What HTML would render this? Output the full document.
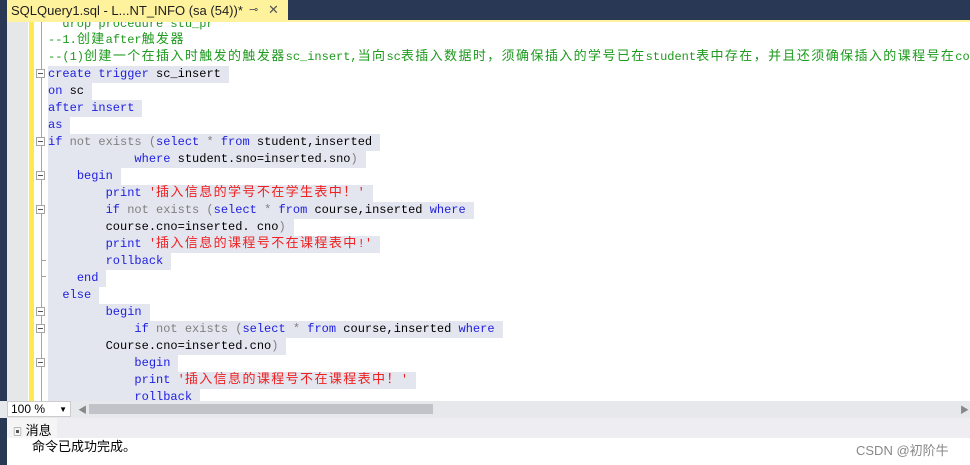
<!DOCTYPE html>
<html><head><meta charset="utf-8"><style>
*{margin:0;padding:0;box-sizing:border-box}
body{width:970px;height:465px;overflow:hidden;background:#fff;position:relative;font-family:"Liberation Sans","Noto Sans CJK SC",sans-serif}
#nav{position:absolute;left:0;top:0;width:970px;height:20px;background:#293955}
#tab{position:absolute;left:0;top:0;width:288px;height:21px;background:#fff29d;font-size:13px;color:#1e1e1e;padding:3px 0 0 11px;white-space:nowrap;line-height:15px}
#tabline{position:absolute;left:0;top:20px;width:970px;height:2px;background:#fff29d}
#lb{position:absolute;left:0;top:0;width:7px;height:465px;background:#293955}
#gut{position:absolute;left:7px;top:22px;width:21px;height:379px;background:#e6e7e8}
#yel{position:absolute;left:29px;top:22px;width:5px;height:379px;background:#fee94e}
#vl{position:absolute;left:41px;top:22px;width:1px;height:379px;background:#a5a5a5}
.fb{position:absolute;left:36px;width:9px;height:9px;border:1px solid #a5a5a5;background:#fff}
.fb:after{content:"";position:absolute;left:1px;top:3px;width:5px;height:1px;background:#555}
.tk{position:absolute;left:41px;width:5px;height:1px;background:#a5a5a5}
#code{position:absolute;left:48px;top:22px;width:922px;height:379px;overflow:hidden}
.l{position:absolute;left:0;height:17px;line-height:17px;font-family:"Liberation Mono","Noto Sans CJK SC",monospace;font-size:12px;color:#000;white-space:pre;overflow:hidden}
.s{display:inline-block;height:17px;line-height:17px;vertical-align:top;background:#e3e6ef;padding-right:8px;overflow:hidden}
.k{color:#2020e0}.g{color:#808080}.c{color:#1e9a1e}.r{color:#f02020}
.z{font-size:13px;letter-spacing:1.4px;font-family:"Noto Sans CJK SC",sans-serif;line-height:12px}
#hs{position:absolute;left:0;top:401px;width:970px;height:17px;background:#e7e8ec}
#zoom{position:absolute;left:7px;top:401px;width:64px;height:16px;background:#fff;border:1px solid #ccc;font-size:12px;padding-left:3px;line-height:14px}
#thumb{position:absolute;left:89px;top:404px;width:344px;height:10px;background:#c2c3c9}
#msgbar{position:absolute;left:7px;top:418px;width:963px;height:20px;background:#eeeef2}
#msgtab{position:absolute;left:7px;top:418px;width:50px;height:20px;background:#f5f5f5;font-size:13px;padding:2px 0 0 6px}
#msg{position:absolute;left:32px;top:436px;font-size:13px}
#wm{position:absolute;left:856px;top:440px;font-size:13px;color:#888}
</style></head><body>
<div id="nav"></div>
<div id="tab">SQLQuery1.sql - L...NT_INFO (sa (54))*<span style="position:absolute;left:249px;top:3px;font-size:11px;color:#555">⊸</span><span style="position:absolute;left:268px;top:2px;color:#555">✕</span></div>
<div id="tabline"></div>
<div id="lb"></div>
<div id="gut"></div>
<div id="yel"></div>
<div id="vl"></div>
<div class="fb" style="top:69px"></div>
<div class="fb" style="top:137px"></div>
<div class="fb" style="top:171px"></div>
<div class="fb" style="top:205px"></div>
<div class="tk" style="top:260px"></div>
<div class="tk" style="top:276px"></div>
<div class="fb" style="top:307px"></div>
<div class="fb" style="top:324px"></div>
<div class="fb" style="top:358px"></div>
<div id="code">
<div class="l" style="top:-6px"><span class="c">  drop procedure stu_pr</span></div>
<div class="l" style="top:10px"><span class="c">--1.<span class="z">创建</span>after<span class="z">触发器</span></span></div>
<div class="l" style="top:27px"><span class="c">--(1)<span class="z">创建一个在插入时触发的触发器</span>sc_insert,<span class="z">当向</span>sc<span class="z">表插入数据时，须确保插入的学号已在</span>student<span class="z">表中存在，并且还须确保插入的课程号在</span>course</span></div>
<div class="l" style="top:44px"><span class="s"><span class="k">create trigger</span> sc_insert</span></div>
<div class="l" style="top:61px"><span class="s"><span class="k">on</span> sc</span></div>
<div class="l" style="top:78px"><span class="s"><span class="k">after insert</span></span></div>
<div class="l" style="top:95px"><span class="s"><span class="k">as</span></span></div>
<div class="l" style="top:112px"><span class="s"><span class="k">if</span> <span class="g">not exists (</span><span class="k">select</span> <span class="g">*</span> <span class="k">from</span> student,inserted</span></div>
<div class="l" style="top:129px"><span class="s">            <span class="k">where</span> student.sno=inserted.sno<span class="g">)</span></span></div>
<div class="l" style="top:146px"><span class="s">    <span class="k">begin</span></span></div>
<div class="l" style="top:163px"><span class="s">        <span class="k">print</span> <span class="r">'<span class="z">插入信息的学号不在学生表中！</span>'</span></span></div>
<div class="l" style="top:180px"><span class="s">        <span class="k">if</span> <span class="g">not exists (</span><span class="k">select</span> <span class="g">*</span> <span class="k">from</span> course,inserted <span class="k">where</span></span></div>
<div class="l" style="top:197px"><span class="s">        course.cno=inserted. cno<span class="g">)</span></span></div>
<div class="l" style="top:214px"><span class="s">        <span class="k">print</span> <span class="r">'<span class="z">插入信息的课程号不在课程表中</span>!'</span></span></div>
<div class="l" style="top:231px"><span class="s">        <span class="k">rollback</span></span></div>
<div class="l" style="top:248px"><span class="s">    <span class="k">end</span></span></div>
<div class="l" style="top:265px"><span class="s">  <span class="k">else</span></span></div>
<div class="l" style="top:282px"><span class="s">        <span class="k">begin</span></span></div>
<div class="l" style="top:299px"><span class="s">            <span class="k">if</span> <span class="g">not exists (</span><span class="k">select</span> <span class="g">*</span> <span class="k">from</span> course,inserted <span class="k">where</span></span></div>
<div class="l" style="top:316px"><span class="s">        Course.cno=inserted.cno<span class="g">)</span></span></div>
<div class="l" style="top:333px"><span class="s">            <span class="k">begin</span></span></div>
<div class="l" style="top:350px"><span class="s">            <span class="k">print</span> <span class="r">'<span class="z">插入信息的课程号不在课程表中！</span>'</span></span></div>
<div class="l" style="top:367px"><span class="s">            <span class="k">rollback</span></span></div>
</div>
<div id="hs"></div>
<div id="zoom">100 % <span style="float:right;font-size:8px;margin-right:3px;margin-top:1px">▼</span></div>
<div style="position:absolute;left:78px;top:403px;font-size:9px;color:#888">◀</div>
<div id="thumb"></div>
<div style="position:absolute;left:960px;top:403px;font-size:9px;color:#888">▶</div>
<div id="msgbar"></div>
<div id="msgtab"><span style="font-size:9px;color:#555">▣</span> 消息</div>
<div id="msg">命令已成功完成。</div>
<div id="wm">CSDN @初阶牛</div>
</body></html>
